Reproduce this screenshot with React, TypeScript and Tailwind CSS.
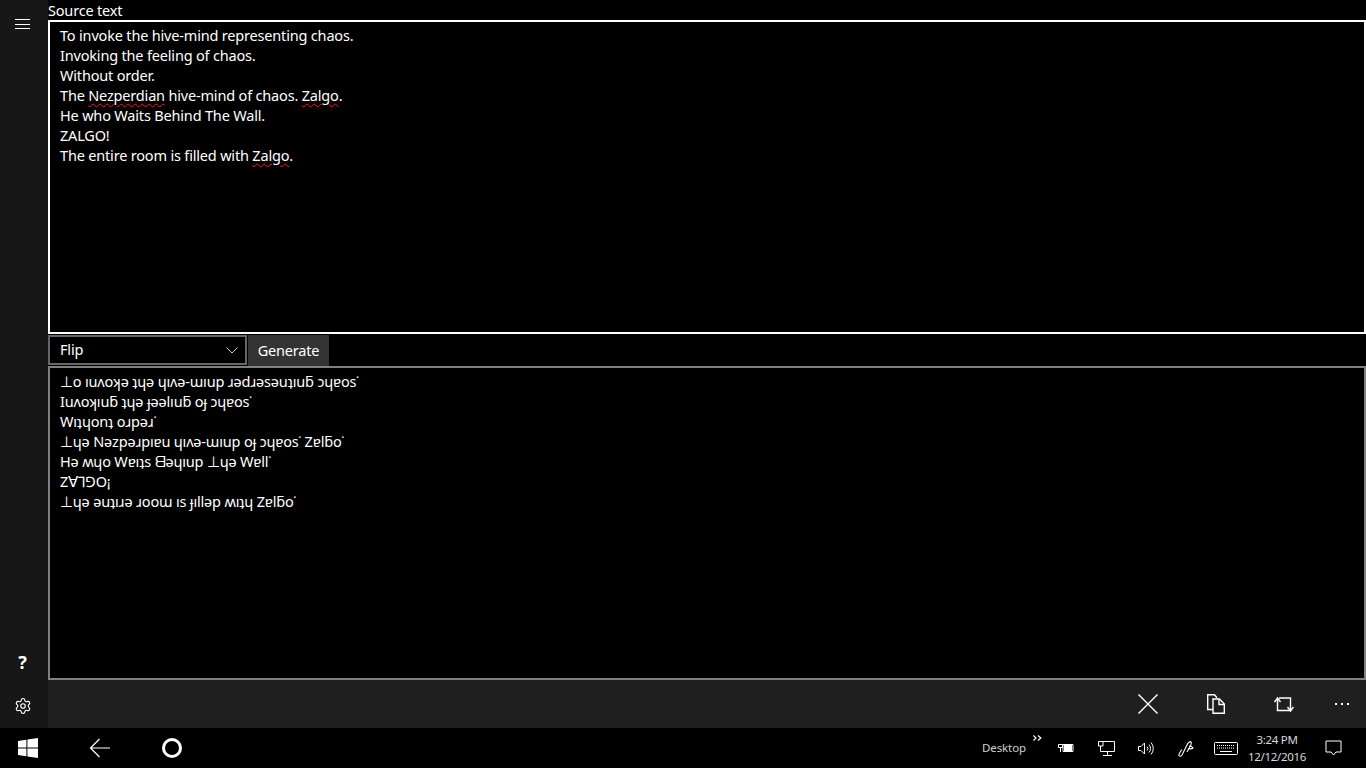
import React from "react";
import { Settings } from "lucide-react";

const font = "font-['Noto_Sans','Open_Sans',sans-serif]";

function Squiggle({ children }: { children: React.ReactNode }) {
  return <span className="underline decoration-wavy decoration-[#ff1020] decoration-1 underline-offset-2">{children}</span>;
}

const flipped = [
  "⊥o ıuʌoʞǝ ʇɥǝ ɥıʌǝ-ɯıup ɹǝdɹǝsǝuʇıuƃ ɔɥɐos˙",
  "Iuʌoʞıuƃ ʇɥǝ ɟǝǝlıuƃ oɟ ɔɥɐos˙",
  "Wıʇɥonʇ oɹpǝɹ˙",
  "⊥ɥǝ Nǝzpǝɹpıɐu ɥıʌǝ-ɯıup oɟ ɔɥɐos˙ Zɐlƃo˙",
  "Hǝ ʍɥo Wɐıʇs ᗺǝɥıup ⊥ɥǝ Wɐll˙",
  "Z∀⅂⅁O¡",
  "⊥ɥǝ ǝuʇıɹǝ ɹooɯ ıs ɟıllǝp ʍıʇɥ Zɐlƃo˙",
];

function Sidebar() {
  return (
    <aside className="flex w-12 flex-col justify-between bg-[#171717] text-white">
      <button className="mt-[19px] ml-[15px] flex h-[10px] w-[15px] flex-col justify-between">
        <span className="h-px w-full bg-white" />
        <span className="h-px w-full bg-white" />
        <span className="h-px w-full bg-white" />
      </button>
      <div className="flex flex-col items-center pr-[3px]">
        <span className="mb-[23px] text-[18px] leading-6 font-bold">?</span>
        <Settings size={18} strokeWidth={1.5} className="mb-[13px]" />
      </div>
    </aside>
  );
}

function CommandBar() {
  return (
    <div className="flex h-12 items-center justify-end bg-[#1f1f1f] pr-[17px] text-white">
      <svg width="20" height="20" viewBox="0 0 20 20" fill="none" stroke="currentColor" strokeWidth="1.4" className="mr-[49px]">
        <path d="M0.500 0.500l19 19M19.500 0.500l-19 19" />
      </svg>
      <svg width="18" height="20" viewBox="0 0 18 20" fill="none" stroke="currentColor" strokeWidth="1.4" className="mr-[49px]">
        <path d="M6 15.500H0.700V0.700h6.800l2.500 3" />
        <path d="M6 5h6.500l4.800 5v9.300H6z" />
        <path d="M12 5v5.500h5" />
      </svg>
      <svg width="20" height="15" viewBox="0 0 20 15" fill="none" stroke="currentColor" strokeWidth="1.4" className="mr-[41px]">
        <path d="M0.500 5l3-4 3 4M3.500 1.500v12h13" />
        <path d="M5 1h11.500v12.500M13.500 10l3 4 3-4" />
      </svg>
      <div className="flex gap-[4px]">
        <span className="h-[2px] w-[2px] bg-white" />
        <span className="h-[2px] w-[2px] bg-white" />
        <span className="h-[2px] w-[2px] bg-white" />
      </div>
    </div>
  );
}

function Taskbar() {
  return (
    <footer className="flex h-10 items-center bg-black text-white">
      <svg width="20" height="20" viewBox="0 0 20 20" fill="currentColor" className="ml-[18px]">
        <path d="M0 3l8.400-1.200v7.600H0zM9.400 1.600L20 0v9.400H9.400zM0 10.500h8.400v7.700L0 17zM9.400 10.500H20V20L9.400 18.400z" />
      </svg>
      <svg width="22" height="20" viewBox="0 0 22 20" fill="none" stroke="currentColor" strokeWidth="1.2" className="ml-[51px]">
        <path d="M21 10H1.500M10.500 1l-9 9 9 9" />
      </svg>
      <span className="ml-[51px] h-5 w-5 rounded-full border-[3px] border-white" />
      <span className="ml-auto text-[11.500px] tracking-[-0.1px] text-[#d0d0d0]">Desktop</span>
      <svg width="9" height="6" viewBox="0 0 9 6" fill="none" stroke="currentColor" strokeWidth="1.2" className="mb-[20px] ml-[7px]">
        <path d="M0.500 0.500l2.500 2.500-2.500 2.500M5 0.500l2.800 2.500-2.800 2.500" />
      </svg>
      <svg width="16" height="10" viewBox="0 0 16 10" fill="none" stroke="currentColor" className="ml-[16px]">
        <path d="M5 1.500h10v7H5z" />
        <path d="M6 2h8v6H6z" fill="currentColor" stroke="none" />
        <path d="M0.500 1.500h4v3h-4zM2.500 5v4" />
      </svg>
      <svg width="17" height="15" viewBox="0 0 17 15" fill="none" stroke="currentColor" className="ml-[24px]">
        <path d="M5 0.500h11.500v10H2.500V5M9.500 10.500V14M5 14.500h9" />
        <path d="M0.500 0.500h4.500v4.500H0.500z" />
      </svg>
      <svg width="16" height="13" viewBox="0 0 16 13" fill="none" stroke="currentColor" className="ml-[23px]">
        <path d="M0.500 4.500h2.500l3.500-3.500v11l-3.500-3.500H0.500zM9 4.500a3 3 0 010 4M11 2.500a6 6 0 010 8M13 0.500a9 9 0 010 12" />
      </svg>
      <svg width="16" height="17" viewBox="0 0 16 17" fill="none" stroke="currentColor" strokeWidth="1.1" className="ml-[24px]">
        <path d="M4 9.500C2 12 0.500 14 1 15.500c.5 1 2 1 3-.5l5-10c1-2.500 3-4 4-3s0 3-1.500 5.500L9 12" />
        <path d="M11 6c1.500 0 3.500 1 4 2-1 1-3 1-5 .5" />
      </svg>
      <svg width="24" height="13" viewBox="0 0 24 13" fill="none" stroke="currentColor" className="ml-[20px]">
        <rect x="0.500" y="0.500" width="23" height="12" rx="1" />
        <path d="M3 3.500h18M3 6h18" strokeDasharray="1 1" />
        <path d="M6 9.500h12" />
      </svg>
      <div className="ml-[10px] flex w-[58px] flex-col items-center text-[11.500px] leading-[17px] tracking-[-0.3px] text-[#d8d8d8]">
        <span>3:24 PM</span>
        <span>12/12/2016</span>
      </div>
      <svg width="17" height="16" viewBox="0 0 17 16" fill="none" stroke="currentColor" className="mr-[24px] ml-[19px]">
        <path d="M1 1h15v11h-5l-2.500 3-2.500-3H1z" />
      </svg>
    </footer>
  );
}

export default function App() {
  return (
    <div className={`flex h-[768px] w-[1366px] flex-col overflow-hidden bg-black text-[14.500px] tracking-[-0.18px] text-white ${font}`}>
      <div className="flex h-[728px]">
        <Sidebar />
        <main className="flex min-w-0 flex-1 flex-col">
          <div className="h-5 leading-[21px]">Source text</div>
          <div className="h-[314px] border-2 border-white px-[10px] py-[3px] leading-5">
            <div>To invoke the hive-mind representing chaos.</div>
            <div>Invoking the feeling of chaos.</div>
            <div>Without order.</div>
            <div>The <Squiggle>Nezperdian</Squiggle> hive-mind of chaos. <Squiggle>Zalgo</Squiggle>.</div>
            <div>He who Waits Behind The Wall.</div>
            <div>ZALGO!</div>
            <div>The entire room is filled with <Squiggle>Zalgo</Squiggle>.</div>
          </div>
          <div className="flex h-[32px] items-start gap-px pt-[1px]">
            <div className="flex h-[30px] w-[199px] items-center justify-between border-2 border-[#666] pr-[7px] pl-[10px] leading-[22px]">
              <span className="-mt-[2px]">Flip</span>
              <svg width="12" height="7" viewBox="0 0 12 7" fill="none" stroke="#ccc" strokeWidth="1">
                <path d="M0.500 0.500L6 6l5.500-5.500" />
              </svg>
            </div>
            <button className="h-[31px] w-[81px] bg-[#333]">Generate</button>
          </div>
          <div className="h-[314px] border-2 border-[#808080] px-[10px] py-[3px] leading-5">
            {flipped.map((line) => (
              <div key={line}>{line}</div>
            ))}
          </div>
          <CommandBar />
        </main>
      </div>
      <Taskbar />
    </div>
  );
}
